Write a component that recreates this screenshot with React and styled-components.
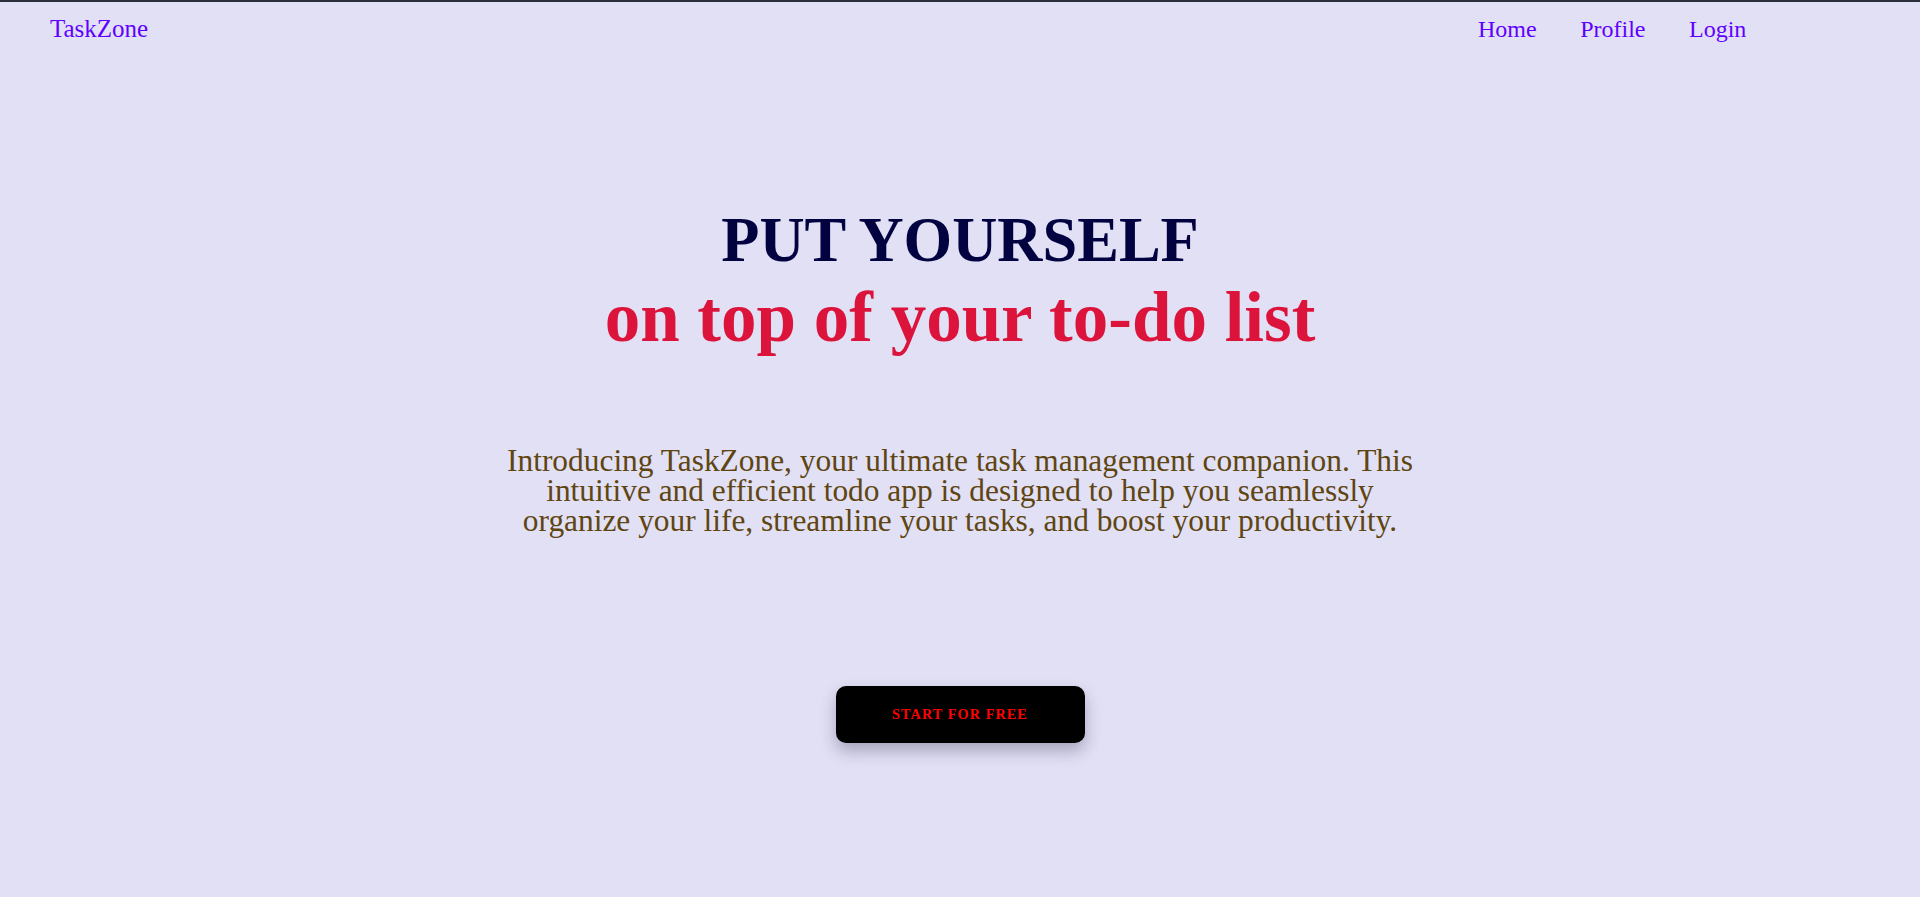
import React from "react";
import styled, { createGlobalStyle } from "styled-components";

const GlobalStyle = createGlobalStyle`
  html, body {
    margin: 0;
    padding: 0;
  }
  body {
    background: #e1e0f5;
    border-top: 2px solid #2b2e3b;
    font-family: "Liberation Serif", "Times New Roman", serif;
    overflow: hidden;
  }
`;

const Page = styled.div`
  display: flex;
  flex-direction: column;
  min-height: 895px;
`;

const Nav = styled.nav`
  display: flex;
  justify-content: space-between;
  align-items: baseline;
  height: 56px;
  box-sizing: border-box;
  padding: 13.8px 173.7px 0 50px;
`;

const Brand = styled.a`
  font-size: 25px;
  line-height: 1;
  color: #6000ff;
  text-decoration: none;
`;

const Links = styled.div`
  display: flex;
  gap: 43.5px;
`;

const NavLink = styled.a`
  font-size: 24px;
  line-height: 1;
  color: #6000ff;
  text-decoration: none;
`;

const Hero = styled.section`
  display: flex;
  flex-direction: column;
  align-items: center;
  text-align: center;
  padding-top: 150.7px;
`;

const Title = styled.h1`
  margin: 0;
  font-weight: bold;
  font-size: 62.5px;
  line-height: 1;
  color: #020240;
`;

const Subtitle = styled.h2`
  margin: 11.3px 0 0;
  font-weight: bold;
  font-size: 71px;
  line-height: 1;
  color: #dc143c;
`;

const Intro = styled.p`
  margin: 92.8px 0 0;
  width: 925px;
  font-size: 31.4px;
  line-height: 30px;
  color: #5f4511;
`;

const StartButton = styled.button`
  margin-top: 149.7px;
  width: 249px;
  height: 57px;
  border: none;
  border-radius: 10px;
  background: #000;
  color: #ff0000;
  font-family: "Liberation Serif", "Times New Roman", serif;
  font-weight: bold;
  font-size: 14.2px;
  letter-spacing: 1.1px;
  text-transform: uppercase;
  box-shadow: 0 8px 16px rgba(30, 30, 60, 0.3);
  cursor: pointer;
`;

export default function App() {
  return (
    <>
      <GlobalStyle />
      <Page>
        <Nav>
          <Brand href="#">TaskZone</Brand>
          <Links>
            <NavLink href="#">Home</NavLink>
            <NavLink href="#">Profile</NavLink>
            <NavLink href="#">Login</NavLink>
          </Links>
        </Nav>
        <Hero>
          <Title>PUT YOURSELF</Title>
          <Subtitle>on top of your to-do list</Subtitle>
          <Intro>
            Introducing TaskZone, your ultimate task management companion. This
            intuitive and efficient todo app is designed to help you seamlessly
            organize your life, streamline your tasks, and boost your
            productivity.
          </Intro>
          <StartButton>Start for free</StartButton>
        </Hero>
      </Page>
    </>
  );
}
